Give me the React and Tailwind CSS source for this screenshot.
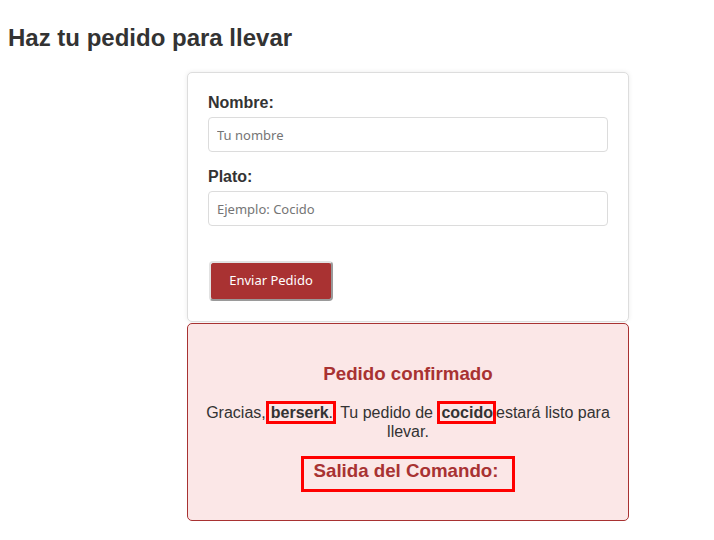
export default function App() {
  const sans = { fontFamily: '"Liberation Sans", Arial, sans-serif' };
  return (
    <div className="min-h-[540px] bg-white text-[#333]" style={sans}>
      <h1 className="ml-2 pt-[24px] text-[24px] font-bold leading-[28px]">Haz tu pedido para llevar</h1>

      <div className="ml-[187px] mt-[20px] w-[442px]">
        <form className="rounded-[5px] border border-[#dddddd] bg-white px-5 pb-5 pt-[21px] shadow-[0_0_5px_rgba(0,0,0,0.08)]">
          <label className="block text-[16px] font-bold leading-[18px]">Nombre:</label>
          <input
            type="text"
            placeholder="Tu nombre"
            className="mt-[5px] block h-[35px] w-full rounded-[4px] border border-[#dcdcdc] px-2 text-[13px] placeholder:text-[#757575] font-['Noto_Sans',sans-serif]"
          />
          <label className="mt-4 block text-[16px] font-bold leading-[18px]">Plato:</label>
          <input
            type="text"
            placeholder="Ejemplo: Cocido"
            className="mt-[5px] block h-[35px] w-full rounded-[4px] border border-[#dcdcdc] px-2 text-[13px] placeholder:text-[#757575] font-['Noto_Sans',sans-serif]"
          />
          <button
            type="button"
            className="ml-px mt-[35px] h-10 w-[124px] rounded-[4px] border-2 border-[#e2e2e2] border-b-[#9a9a9a] border-r-[#9a9a9a] bg-[#a93232] text-[13px] text-white font-['Noto_Sans',sans-serif]"
          >
            Enviar Pedido
          </button>
        </form>

        <div className="mt-px rounded-[5px] border border-[#a83232] bg-[#fbe7e7] px-3 pb-7 pt-[39px] text-center">
          <h3 className="text-[18.72px] font-bold leading-[21px] text-[#a83232]">Pedido confirmado</h3>
          <p className="mt-[19px] text-[16px] leading-[19px]">
            Gracias,<span className="border-[3px] border-[#ff0000] pl-0.5"><b>berserk</b>.</span> Tu pedido de{" "}
            <span className="border-[3px] border-[#ff0000] pl-px"><b>cocido</b></span>estará listo para llevar.
          </p>
          <div className="mt-[15px]">
            <h3 className="inline-block border-[3px] border-[#ff0000] pb-2 pl-[10px] pr-[14px] pt-px text-[18.72px] font-bold leading-[21px] text-[#a83232]">
              Salida del Comando:
            </h3>
          </div>
        </div>
      </div>
    </div>
  );
}
